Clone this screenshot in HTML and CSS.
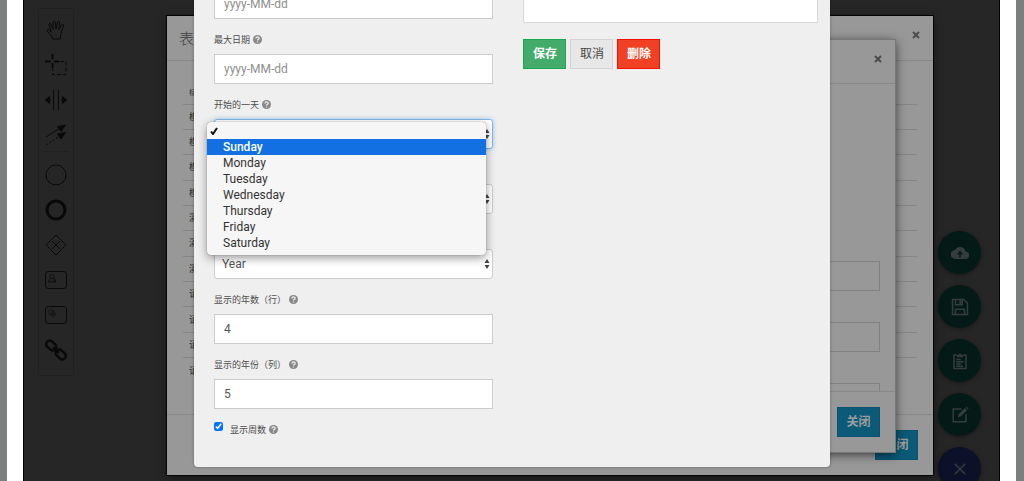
FILE: index.html
```
<!DOCTYPE html>
<html>
<head>
    <meta charset="UTF-8">
    <title>表单</title>
    <link rel="stylesheet" href="styles.css">
</head>
<body>
    <div class="editor">
        <div class="palette">
            <svg viewBox="0 0 22 22"><path d="M7.5 20 L6.5 17 L2.5 12.5 C1.5 11 3 10 4.2 11 L6.3 13 L4 6 C3.6 4.2 5.6 3.8 6.1 5.5 L8.2 10.5 L8 3.5 C8 1.8 10.1 1.8 10.3 3.5 L11 10 L12.5 3.2 C13 1.7 14.9 2.1 14.6 3.8 L13.8 10.5 L16.8 5.8 C17.8 4.6 19.3 5.6 18.6 7 L16.2 12.5 C16.2 15 15.2 17 15.2 20 Z"/></svg>
            <svg viewBox="0 0 22 22"><path stroke-width="2" d="M0 7.5h5.5M9 7.5h5M7.500 0v5.500M7.500 9v5"/><path stroke-dasharray="4 2" d="M15 7.500h6v13H7.500v-6"/></svg>
            <svg viewBox="0 0 22 22"><path d="M8.500.5v21M13.500.5v21M3 11h3M16 11h3"/><path class="solid" d="M.5 11l4-3.500v7zM21.500 11l-4-3.500v7z"/></svg>
            <svg viewBox="0 0 22 22"><path d="M1 13L15 4"/><path stroke-dasharray="2 2" d="M1 21L15 12"/><path class="solid" d="M20.500 1l-8 1.500 3.500 5zM20.500 8.500l-8 1.500 3.500 5z"/></svg>
            <hr>
            <svg viewBox="0 0 22 22"><circle cx="11" cy="11" r="10"/></svg>
            <svg viewBox="0 0 22 22"><circle cx="11" cy="11" r="9" stroke-width="3"/></svg>
            <svg viewBox="0 0 22 22"><path d="M11 1l10 10-10 10L1 11zM7 7l8 8M15 7l-8 8"/></svg>
            <svg viewBox="0 0 22 22"><rect x=".5" y="2.500" width="21" height="17" rx="3"/><g stroke-width=".7"><circle cx="7" cy="7.500" r="2"/><path d="M3.500 13v-2l2-1.500M8.500 9.500l2 1.500v2zM3.500 13h7M5.500 11.500v1.500M8.700 11.500v1.500"/></g></svg>
            <svg viewBox="0 0 22 22"><rect x=".5" y="2.500" width="21" height="17" rx="3"/><g stroke-width=".7"><circle cx="6" cy="8" r="2.600" stroke-dasharray="1 .6"/><circle cx="8" cy="10" r="2.800" stroke-dasharray="1 .6"/><circle cx="8" cy="10" r="1"/></g></svg>
            <svg viewBox="0 0 22 22"><g stroke-width="2.500" transform="rotate(43 11 11)"><rect x="-1" y="7.500" width="11" height="7" rx="3.200"/><rect x="12" y="7.500" width="11" height="7" rx="3.200"/><path d="M7 11h8"/></g></svg>
        </div>

        <div class="actions">
            <button class="fab" aria-label="上传"><svg viewBox="0 0 24 24"><path class="fill" d="M19.400 10A7.500 7.500 0 0 0 5.400 8 6 6 0 0 0 6 20h13a5 5 0 0 0 .4-10z"/><path class="cut" d="M12 9l-4.500 5H11v4h2v-4h3.500z"/></svg></button>
            <button class="fab" aria-label="保存表单"><svg viewBox="0 0 24 24"><path d="M2 2h15l5 5v15H2zM6 2v7h9V2M6 22v-7h12v7"/><path class="fill" d="M11 3h3v5h-3z"/></svg></button>
            <button class="fab" aria-label="列表"><svg viewBox="0 0 24 24"><path d="M8 4H4v18h16V4h-4M7 10h6M7 13h10M7 16h6M7 19h9"/><path class="fill" d="M8 7V4h2a2 2 0 0 1 4 0h2v3z"/></svg></button>
            <button class="fab" aria-label="编辑"><svg viewBox="0 0 24 24"><path d="M14 4H3v17h17V11"/><path class="fill" d="M9 15l1-4 8.500-8.500 3 3L13 14zM19.500 1.500l1-1 3 3-1 1z"/></svg></button>
            <button class="fab fab-close" aria-label="收起"><svg viewBox="0 0 24 24"><path d="M5 5l14 14M19 5L5 19"/></svg></button>
        </div>
    </div>

    <div class="layer layer-list">
        <section class="modal">
            <header><h2>表单</h2><button class="close" aria-label="关闭"><svg viewBox="0 0 8 8"><path d="M1 1l6 6M7 1L1 7"/></svg></button></header>
            <div class="modal-body">
                <table>
                    <thead><tr><th>标</th></tr></thead>
                    <tbody>
                        <tr><td>模</td></tr>
                        <tr><td>模</td></tr>
                        <tr><td>模</td></tr>
                        <tr><td>模</td></tr>
                        <tr><td>演</td></tr>
                        <tr><td>演</td></tr>
                        <tr><td>演</td></tr>
                        <tr><td>请</td></tr>
                        <tr><td>请</td></tr>
                        <tr><td>请</td></tr>
                        <tr><td>请</td></tr>
                    </tbody>
                </table>
            </div>
            <footer><button class="btn btn-info">关闭</button></footer>
        </section>
    </div>

    <div class="layer layer-form">
        <section class="modal modal-form">
            <header><button class="close" aria-label="关闭"><svg viewBox="0 0 8 8"><path d="M1 1l6 6M7 1L1 7"/></svg></button></header>
            <div class="modal-body">
                <input type="text" aria-label="名称">
                <input type="text" aria-label="键">
                <input type="text" aria-label="描述">
            </div>
            <footer><button class="btn btn-info">关闭</button></footer>
        </section>
    </div>

    <div class="layer layer-settings">
        <form class="settings">
            <div class="fields">
                <div class="field">
                    <input type="text" placeholder="yyyy-MM-dd" aria-label="最小日期">
                </div>
                <div class="field">
                    <label for="maxDate">最大日期 <svg class="help" viewBox="0 0 10 10"><circle cx="5" cy="5" r="5"/><path d="M3.300 3.800c0-2.200 3.500-2.200 3.500 0C6.800 5 5 4.800 5 6.200M5 7.200v1.200"/></svg></label>
                    <input type="text" id="maxDate" placeholder="yyyy-MM-dd">
                </div>
                <div class="field">
                    <label for="startDay">开始的一天 <svg class="help" viewBox="0 0 10 10"><circle cx="5" cy="5" r="5"/><path d="M3.300 3.800c0-2.200 3.500-2.200 3.500 0C6.800 5 5 4.800 5 6.200M5 7.200v1.200"/></svg></label>
                    <div class="select focus">
                        <select id="startDay"><option></option></select>
                        <svg viewBox="0 0 6 10"><path d="M3 0l2.500 4h-5zM3 10l2.500-4h-5z"/></svg>
                        <ul class="menu" role="listbox" aria-label="开始的一天">
                            <li role="option" aria-selected="true"><svg viewBox="0 0 8 8"><path d="M1 4.500L3 7l4-6"/></svg></li>
                            <li role="option" class="active">Sunday</li>
                            <li role="option">Monday</li>
                            <li role="option">Tuesday</li>
                            <li role="option">Wednesday</li>
                            <li role="option">Thursday</li>
                            <li role="option">Friday</li>
                            <li role="option">Saturday</li>
                        </ul>
                    </div>
                </div>
                <div class="field no-label">
                    <div class="select">
                        <select aria-label="最小模式"><option></option></select>
                        <svg viewBox="0 0 6 10"><path d="M3 0l2.500 4h-5zM3 10l2.500-4h-5z"/></svg>
                    </div>
                </div>
                <div class="field no-label">
                    <div class="select">
                        <select aria-label="最大模式"><option>Year</option></select>
                        <svg viewBox="0 0 6 10"><path d="M3 0l2.500 4h-5zM3 10l2.500-4h-5z"/></svg>
                    </div>
                </div>
                <div class="field">
                    <label for="yearRows">显示的年数（行） <svg class="help" viewBox="0 0 10 10"><circle cx="5" cy="5" r="5"/><path d="M3.300 3.800c0-2.200 3.500-2.200 3.500 0C6.800 5 5 4.800 5 6.200M5 7.200v1.200"/></svg></label>
                    <input type="text" id="yearRows" value="4">
                </div>
                <div class="field">
                    <label for="yearCols">显示的年份（列） <svg class="help" viewBox="0 0 10 10"><circle cx="5" cy="5" r="5"/><path d="M3.300 3.800c0-2.200 3.500-2.200 3.500 0C6.800 5 5 4.800 5 6.200M5 7.200v1.200"/></svg></label>
                    <input type="text" id="yearCols" value="5">
                </div>
                <div class="check">
                    <input type="checkbox" id="showWeeks" checked>
                    <label for="showWeeks">显示周数 <svg class="help" viewBox="0 0 10 10"><circle cx="5" cy="5" r="5"/><path d="M3.300 3.800c0-2.200 3.500-2.200 3.500 0C6.800 5 5 4.800 5 6.200M5 7.200v1.200"/></svg></label>
                </div>
            </div>
            <div class="preview">
                <div class="preview-box"></div>
                <div class="buttons">
                    <button type="button" class="btn btn-success">保存</button>
                    <button type="button" class="btn btn-default">取消</button>
                    <button type="button" class="btn btn-danger">删除</button>
                </div>
            </div>
        </form>
    </div>
</body>
</html>
```
FILE: styles.css
```
* {
    box-sizing: border-box;
}

body {
    margin: 0;
    padding: 0 8px 0 7px;
    min-height: 100vh;
    display: flex;
    overflow: hidden;
    position: relative;
    background: #7b7f7e;
    font-family: Roboto, "Noto Sans CJK SC", sans-serif;
    font-size: 12px;
    color: #555;
}

button, input, select {
    font: inherit;
    color: inherit;
}

.editor {
    flex: 1;
    display: flex;
    justify-content: space-between;
    align-items: flex-start;
    padding: 8px 19px 0 15px;
    background: #262626;
    border: solid #fff;
    border-width: 0 16px;
    box-shadow: inset 1px 0 #000, inset -1px 0 #000;
}

/* left toolbox */
.palette {
    display: flex;
    flex-direction: column;
    align-items: center;
    gap: 13px;
    width: 36px;
    padding: 10px 0 14px;
    border: 1px solid #1f1f1f;
    border-radius: 2px;
}

.palette svg {
    width: 22px;
    height: 22px;
    fill: none;
    stroke: #090909;
    stroke-width: 1;
}

.palette .solid {
    fill: #090909;
}

.palette hr {
    width: 26px;
    height: 1px;
    margin: -8px 0 -1px;
    border: 0;
    background: #202020;
}

/* round buttons */
.actions {
    display: flex;
    flex-direction: column;
    gap: 11px;
    padding-top: 223px;
    height: 473px;
}

.fab {
    flex: none;
    width: 43px;
    height: 43px;
    padding: 0;
    border: 0;
    border-radius: 50%;
    background: #041a16;
    box-shadow: 0 1px 4px rgba(0, 0, 0, .4);
}

.fab svg {
    display: block;
    width: 18px;
    height: 18px;
    margin: auto;
    fill: none;
    stroke: #343d3b;
    stroke-width: 2;
}

.fab .fill {
    fill: #343d3b;
    stroke: none;
}

.fab .cut {
    fill: #041a16;
    stroke: none;
}

.fab-close {
    background: #0c1028;
}

/* stacked dialogs */
.layer {
    position: absolute;
    inset: 0;
    display: flex;
    justify-content: center;
    align-items: flex-start;
}

.layer-list {
    padding: 16px 0 0 76px;
}

.layer-form {
    padding: 40px 0 0 76px;
}

.modal {
    width: 100%;
    max-width: 766px;
    background: #989898;
    box-shadow: 0 0 0 1px #050505, 0 2px 8px rgba(0, 0, 0, .5);
}

.modal header {
    display: flex;
    justify-content: space-between;
    align-items: flex-start;
    height: 45px;
    padding: 12px 13px 0 12px;
    border-bottom: 1px solid #878787;
}

.modal h2 {
    margin: 0;
    font-size: 15px;
    line-height: 22px;
    font-weight: 300;
    color: #404040;
}

.close {
    margin-left: auto;
    padding: 3px 0;
    border: 0;
    background: none;
}

.close svg {
    display: block;
    width: 8px;
    height: 8px;
    fill: none;
    stroke: #4b4b4b;
    stroke-width: 2;
}

.modal-body {
    height: 353px;
    padding: 21px 16px;
    overflow: hidden;
}

.modal table {
    width: 100%;
    height: 301px;
    border-collapse: collapse;
    font-size: 9px;
    line-height: 12px;
    color: #2c2c2c;
}

.modal th {
    height: 22px;
    font-size: 7px;
    font-weight: normal;
    text-align: left;
}

.modal td {
    height: 25px;
}

.modal th, .modal td {
    padding: 0 6px;
    border-bottom: 1px solid #858585;
}

.modal tr:last-child td {
    border-bottom: 0;
}

.modal footer {
    display: flex;
    justify-content: flex-end;
    padding: 15px;
    border-top: 1px solid #878787;
}

.modal-form {
    max-width: 690px;
    box-shadow: 0 0 0 1px #777, 0 2px 10px rgba(0, 0, 0, .7);
}

.modal-form header {
    height: 44px;
}

.modal-form .modal-body {
    display: flex;
    flex-direction: column;
    gap: 31px;
    height: 307px;
    padding: 177px 15px 0;
}

.modal-form input {
    flex: none;
    height: 30px;
    border: 1px solid #818181;
    background: #989898;
}

/* buttons */
.btn {
    min-width: 43px;
    height: 30px;
    padding: 0 8px;
    border: 1px solid;
    font-weight: bold;
    line-height: 16px;
}

.btn-info {
    background: #0b5a77;
    border-color: #075370;
    color: #9d9d9d;
}

.btn-success {
    background: #43ac6a;
    border-color: #1aa653;
    color: #fff;
}

.btn-default {
    background: #e7e7e7;
    border-color: #d4d4d4;
    color: #444;
    font-weight: normal;
}

.btn-danger {
    background: #f04124;
    border-color: #f50f00;
    color: #fff;
}

/* component settings */
.settings {
    display: flex;
    gap: 30px;
    width: 100%;
    max-width: 636px;
    padding: 0 12px 27px 20px;
    background: #efefef;
    border-radius: 0 0 4px 4px;
    box-shadow: 0 0 3px rgba(0, 0, 0, .35);
}

.fields {
    flex: 279;
    margin-top: -11px;
}

.field {
    margin-bottom: 11px;
}

.field label {
    display: block;
    height: 24px;
}

.no-label {
    padding-top: 24px;
}

.settings label {
    font-size: 9px;
    line-height: 20px;
    color: #4d4d4d;
}

.help {
    width: 9px;
    height: 9px;
    margin-left: 1px;
    vertical-align: -1px;
    fill: #888;
}

.help path {
    fill: none;
    stroke: #efefef;
    stroke-width: 1.4;
}

.field input, .select select {
    display: block;
    width: 100%;
    height: 30px;
    padding: 0 9px;
    border: 1px solid #ccc;
    background: #fff;
}

.field input::placeholder {
    color: #8f8f8f;
}

.select {
    position: relative;
}

.select select {
    appearance: none;
    padding: 0 7px;
    border-radius: 3px;
}

.select > svg {
    position: absolute;
    top: 10px;
    right: 3px;
    width: 6px;
    height: 10px;
    fill: #444;
}

.focus select {
    border-color: #7db8ea;
    box-shadow: 0 0 5px #9fcdf2;
}

.menu {
    position: absolute;
    z-index: 1;
    top: 3px;
    left: -7px;
    width: 100%;
    margin: 0;
    padding: 1px 0 4px;
    list-style: none;
    background: #f6f6f6;
    border-radius: 4px;
    box-shadow: 0 0 1px rgba(0, 0, 0, .5), 0 3px 10px rgba(0, 0, 0, .4);
    line-height: 16px;
    color: #333;
}

.menu li {
    height: 16px;
    padding-left: 16px;
}

.menu li[aria-selected] {
    padding-left: 3px;
}

.menu svg {
    width: 8px;
    height: 8px;
    fill: none;
    stroke: #111;
    stroke-width: 2;
}

.menu .active {
    background: #1270e3;
    color: #fff;
    font-weight: 500;
}

.check {
    display: flex;
    align-items: flex-start;
    gap: 7px;
}

.check input {
    width: 9px;
    height: 9px;
    margin: 2px 0 0;
}

.preview {
    flex: 294;
}

.preview-box {
    height: 23px;
    margin-bottom: 16px;
    background: #fff;
    border: 1px solid #d8d8d8;
    border-top: 0;
}

.buttons {
    display: flex;
    gap: 4px;
}
```
